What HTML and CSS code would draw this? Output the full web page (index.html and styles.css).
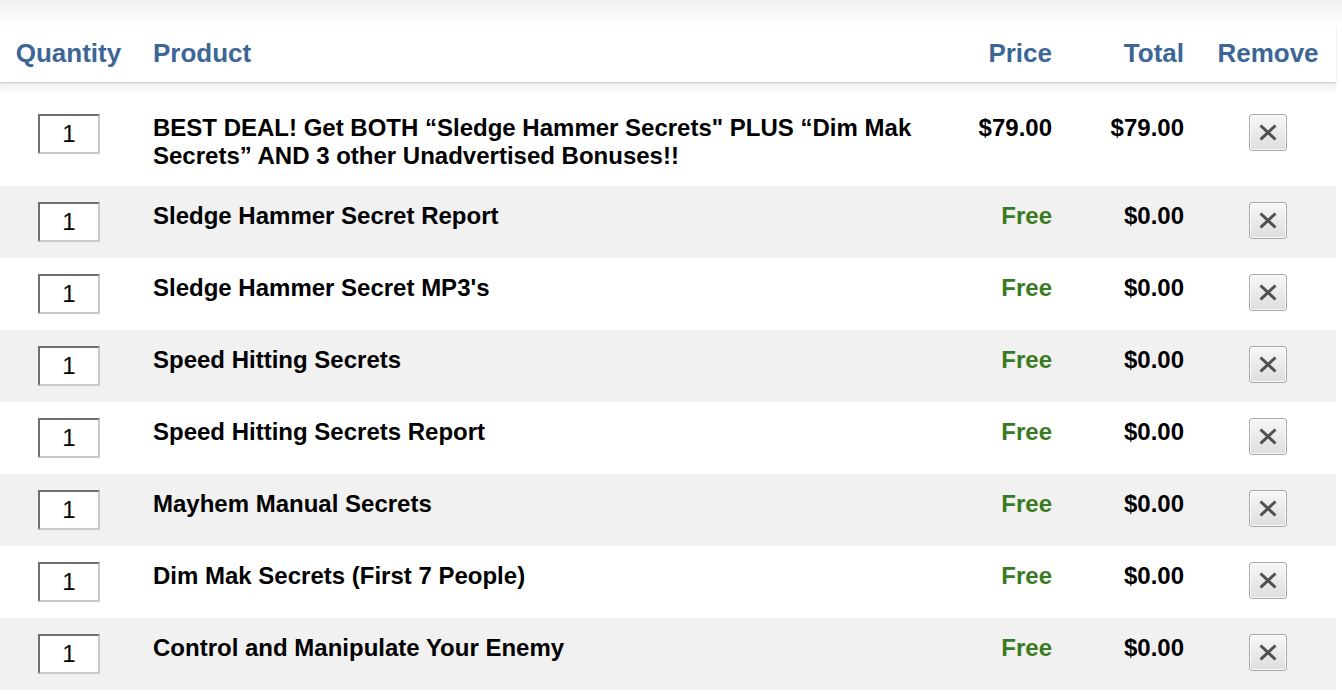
FILE: index.html
```html
<!DOCTYPE html>
<html>
<head>
<meta charset="utf-8">
<link rel="stylesheet" href="styles.css">
</head>
<body>
<div class="topfade"></div>
<div class="cart">
  <div class="row head">
    <div class="c-qty">Quantity</div>
    <div class="c-prod">Product</div>
    <div class="c-price">Price</div>
    <div class="c-total">Total</div>
    <div class="c-rem">Remove</div>
  </div>
  <div class="body">
    <div class="row item">
      <div class="c-qty"><input class="qty" type="text" value="1"></div>
      <div class="c-prod">BEST DEAL! Get BOTH “Sledge Hammer Secrets" PLUS “Dim Mak Secrets” AND 3 other Unadvertised Bonuses!!</div>
      <div class="c-price">$79.00</div>
      <div class="c-total">$79.00</div>
      <div class="c-rem"><button class="rm"><svg width="18" height="17" viewBox="0 0 18 17"><path d="M1.5 1.5 L16.5 15.5 M16.5 1.5 L1.5 15.5" stroke="#4f4f4f" stroke-width="3" fill="none"/></svg></button></div>
    </div>
    <div class="row item alt">
      <div class="c-qty"><input class="qty" type="text" value="1"></div>
      <div class="c-prod">Sledge Hammer Secret Report</div>
      <div class="c-price free">Free</div>
      <div class="c-total">$0.00</div>
      <div class="c-rem"><button class="rm"><svg width="18" height="17" viewBox="0 0 18 17"><path d="M1.5 1.5 L16.5 15.5 M16.5 1.5 L1.5 15.5" stroke="#4f4f4f" stroke-width="3" fill="none"/></svg></button></div>
    </div>
    <div class="row item">
      <div class="c-qty"><input class="qty" type="text" value="1"></div>
      <div class="c-prod">Sledge Hammer Secret MP3's</div>
      <div class="c-price free">Free</div>
      <div class="c-total">$0.00</div>
      <div class="c-rem"><button class="rm"><svg width="18" height="17" viewBox="0 0 18 17"><path d="M1.5 1.5 L16.5 15.5 M16.5 1.5 L1.5 15.5" stroke="#4f4f4f" stroke-width="3" fill="none"/></svg></button></div>
    </div>
    <div class="row item alt">
      <div class="c-qty"><input class="qty" type="text" value="1"></div>
      <div class="c-prod">Speed Hitting Secrets</div>
      <div class="c-price free">Free</div>
      <div class="c-total">$0.00</div>
      <div class="c-rem"><button class="rm"><svg width="18" height="17" viewBox="0 0 18 17"><path d="M1.5 1.5 L16.5 15.5 M16.5 1.5 L1.5 15.5" stroke="#4f4f4f" stroke-width="3" fill="none"/></svg></button></div>
    </div>
    <div class="row item">
      <div class="c-qty"><input class="qty" type="text" value="1"></div>
      <div class="c-prod">Speed Hitting Secrets Report</div>
      <div class="c-price free">Free</div>
      <div class="c-total">$0.00</div>
      <div class="c-rem"><button class="rm"><svg width="18" height="17" viewBox="0 0 18 17"><path d="M1.5 1.5 L16.5 15.5 M16.5 1.5 L1.5 15.5" stroke="#4f4f4f" stroke-width="3" fill="none"/></svg></button></div>
    </div>
    <div class="row item alt">
      <div class="c-qty"><input class="qty" type="text" value="1"></div>
      <div class="c-prod">Mayhem Manual Secrets</div>
      <div class="c-price free">Free</div>
      <div class="c-total">$0.00</div>
      <div class="c-rem"><button class="rm"><svg width="18" height="17" viewBox="0 0 18 17"><path d="M1.5 1.5 L16.5 15.5 M16.5 1.5 L1.5 15.5" stroke="#4f4f4f" stroke-width="3" fill="none"/></svg></button></div>
    </div>
    <div class="row item">
      <div class="c-qty"><input class="qty" type="text" value="1"></div>
      <div class="c-prod">Dim Mak Secrets (First 7 People)</div>
      <div class="c-price free">Free</div>
      <div class="c-total">$0.00</div>
      <div class="c-rem"><button class="rm"><svg width="18" height="17" viewBox="0 0 18 17"><path d="M1.5 1.5 L16.5 15.5 M16.5 1.5 L1.5 15.5" stroke="#4f4f4f" stroke-width="3" fill="none"/></svg></button></div>
    </div>
    <div class="row item alt">
      <div class="c-qty"><input class="qty" type="text" value="1"></div>
      <div class="c-prod">Control and Manipulate Your Enemy</div>
      <div class="c-price free">Free</div>
      <div class="c-total">$0.00</div>
      <div class="c-rem"><button class="rm"><svg width="18" height="17" viewBox="0 0 18 17"><path d="M1.5 1.5 L16.5 15.5 M16.5 1.5 L1.5 15.5" stroke="#4f4f4f" stroke-width="3" fill="none"/></svg></button></div>
    </div>
  </div>
</div>
</body>
</html>
```

FILE: styles.css
```css
html, body {
  margin: 0;
  padding: 0;
  background: #fff;
}
body {
  font-family: "Liberation Sans", Arial, Helvetica, sans-serif;
  overflow: hidden;
}
.topfade {
  height: 25px;
  background: linear-gradient(#f0f0f0, #ffffff);
}
.cart {
  width: 1336px;
}
.row {
  display: grid;
  grid-template-columns: 137px 1fr 110px 132px 136px;
}
.head {
  height: 57px;
  align-items: center;
  font-size: 26px;
  line-height: 30px;
  font-weight: bold;
  color: #3c6696;
  background: #fff;
  position: relative;
  z-index: 1;
  box-shadow: 0 1px 2px rgba(0,0,0,0.16);
}
.head > div {
  margin-top: -2px;
}
.body {
  padding-top: 16px;
  background: linear-gradient(#ececec 0px, #f7f7f7 6px, #ffffff 14px) top / 100% 16px no-repeat;
}
.item {
  padding: 16px 0;
  font-size: 24px;
  line-height: 28px;
  font-weight: bold;
  color: #000;
  align-items: start;
}
.alt {
  background: #f1f1f1;
}
.c-qty {
  text-align: center;
}
.c-prod {
  padding-left: 16px;
  padding-right: 20px;
}
.c-price, .c-total {
  text-align: right;
  padding-right: 16px;
}
.c-rem {
  text-align: center;
}
.free {
  color: #3a7b22;
}
.qty {
  box-sizing: border-box;
  width: 62px;
  height: 40px;
  margin: 0;
  padding: 0;
  border-style: solid;
  border-width: 2px;
  border-color: #707070 #c9c9c9 #c9c9c9 #707070;
  background: #fff;
  font-family: "Liberation Sans", Arial, sans-serif;
  font-size: 24px;
  color: #000;
  text-align: center;
  display: block;
  margin-left: 38px;
}
.rm {
  box-sizing: border-box;
  width: 38px;
  height: 37px;
  margin: 0;
  padding: 0;
  border: 1px solid #a8a8a8;
  border-radius: 3px;
  background: linear-gradient(#f7f7f7, #dedede);
  box-shadow: inset 0 0 0 1px #fafafa;
  display: inline-flex;
  align-items: center;
  justify-content: center;
  vertical-align: top;
}
.rm svg {
  display: block;
  filter: blur(0.5px);
}
```
